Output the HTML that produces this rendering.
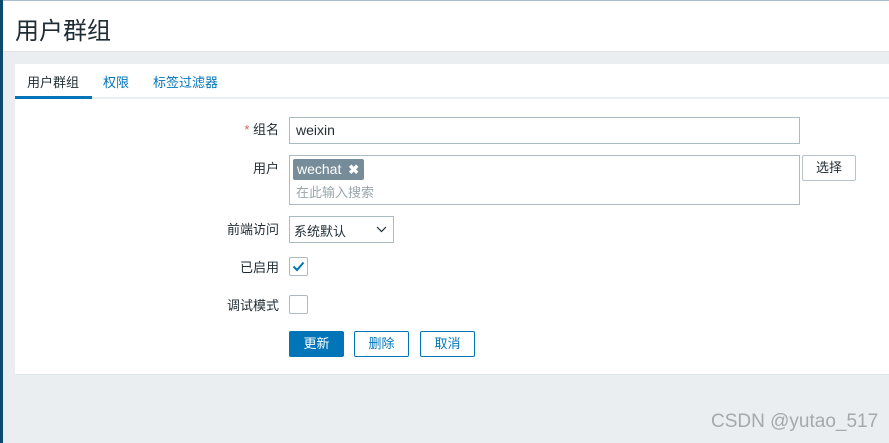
<!DOCTYPE html>
<html><head><meta charset="utf-8"><style>
*{box-sizing:border-box;margin:0;padding:0}
body{width:889px;height:443px;overflow:hidden;background:#ebeef0;font-family:"Liberation Sans","Noto Sans CJK SC",sans-serif;font-size:13px;color:#1f2c33;position:relative}
.strip{position:absolute;left:0;top:0;width:3px;height:443px;background:#0c4a6e}
.hdr{position:absolute;left:3px;top:0;right:0;height:52px;background:#fff;border-top:1px solid #a9bcd0;border-bottom:1px solid #dfe4e7}
.hdr h1{position:absolute;left:12px;top:10px;font-size:24px;font-weight:normal;color:#1f2c33}
.panel{position:absolute;left:15px;top:64px;right:0;height:311px;background:#fff;border-bottom:1px solid #dfe4e7}
.tabs{height:35px;border-bottom:2px solid #ebeef0;position:relative}
.tab{position:absolute;top:8px;font-size:13px;color:#0275b8}
.tab.a{color:#1f2c33}
.ul{position:absolute;left:0;top:32px;width:77px;height:3px;background:#0275b8}
.lbl{position:absolute;right:610px;font-size:13px;text-align:right;white-space:nowrap}
.inp{position:absolute;border:1px solid #acbbc2;background:#fff}
.btn{position:absolute;height:26px;border:1px solid #0275b8;border-radius:2px;color:#0275b8;text-align:center;line-height:24px;font-size:13px;background:#fff}
</style></head><body>
<div class="strip"></div>
<div class="hdr"><h1>用户群组</h1></div>
<div class="panel">
 <div class="tabs">
  <span class="tab a" style="left:12px">用户群组</span>
  <span class="tab" style="left:88px">权限</span>
  <span class="tab" style="left:138px">标签过滤器</span>
  <div class="ul"></div>
 </div>
</div>
<div class="lbl" style="top:119px"><span style="color:#e45959">*</span> 组名</div>
<div class="inp" style="left:289px;top:117px;width:511px;height:27px;padding:4px 6px;font-size:14px">weixin</div>
<div class="lbl" style="top:158px">用户</div>
<div class="inp" style="left:289px;top:155px;width:511px;height:50px">
 <div style="position:absolute;left:3px;top:3px;width:71px;height:21px;background:#768d99;border-radius:2px;color:#fff;font-size:14px;padding:1px 4px;line-height:19px">wechat <span style="font-weight:bold;font-size:13px;margin-left:3px">✖</span></div>
 <div style="position:absolute;left:6px;top:26px;color:#9aa7ad;font-size:13px">在此输入搜索</div>
</div>
<div class="inp" style="left:802px;top:155px;width:54px;height:26px;border-radius:2px;text-align:center;line-height:24px;border-color:#b8c4ca">选择</div>
<div class="lbl" style="top:219px">前端访问</div>
<div class="inp" style="left:289px;top:216px;width:105px;height:27px;padding:4px 4px;font-size:13px">系统默认
 <svg style="position:absolute;right:6px;top:9px" width="11" height="7" viewBox="0 0 11 7"><path d="M1 1l4.5 4.5L10 1" fill="none" stroke="#1f2c33" stroke-width="1.2"/></svg></div>
<div class="lbl" style="top:257px">已启用</div>
<div class="inp" style="left:289px;top:257px;width:19px;height:19px;border-radius:2px">
 <svg style="position:absolute;left:2px;top:3px" width="13" height="11" viewBox="0 0 13 11"><path d="M1.5 5.5l3.5 3.5L11.5 1.5" fill="none" stroke="#0275b8" stroke-width="2"/></svg></div>
<div class="lbl" style="top:295px">调试模式</div>
<div class="inp" style="left:289px;top:295px;width:19px;height:19px;border-radius:2px"></div>
<div class="btn" style="left:289px;top:331px;width:55px;background:#0275b8;color:#fff">更新</div>
<div class="btn" style="left:354px;top:331px;width:55px">删除</div>
<div class="btn" style="left:420px;top:331px;width:55px">取消</div>
<div style="position:absolute;left:711px;top:411px;font-size:19px;color:#a4a9ac;font-family:'Liberation Sans',sans-serif">CSDN @yutao_517</div>
</body></html>
